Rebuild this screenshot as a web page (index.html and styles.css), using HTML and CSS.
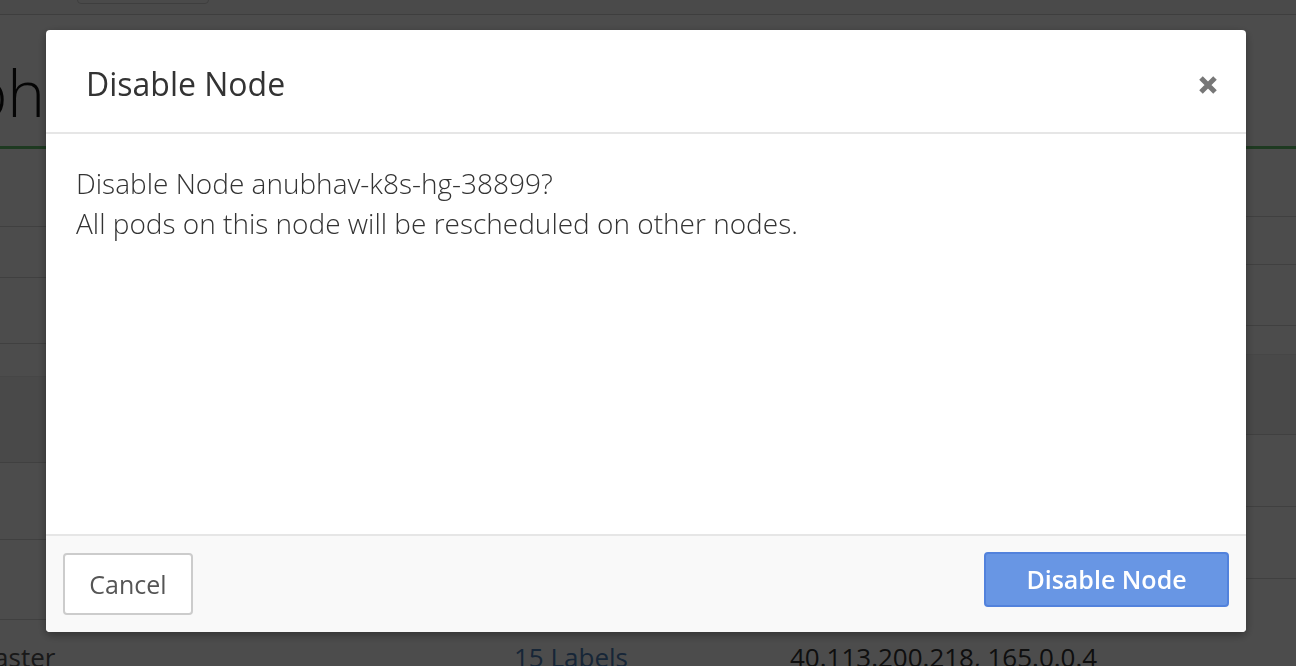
FILE: index.html
```html
<!DOCTYPE html>
<html lang="en">
<head>
<meta charset="utf-8">
<title>Disable Node</title>
<link rel="stylesheet" href="styles.css">
</head>
<body>
<div class="page">
  <div class="topbar"><div class="tb-btn"></div></div>
  <div class="heading"><h1 class="h-text">Graph</h1></div>
  <div class="rule"></div>
  <div class="content">
    <div class="main">
      <div class="row m1"></div>
      <div class="row m2"></div>
      <div class="row m3"></div>
      <div class="row m4 soft"></div>
      <div class="row m5 shade"></div>
      <div class="row m6"></div>
      <div class="row m7"></div>
      <div class="row last">
        <span class="tag">master</span>
        <a class="labels">15 Labels</a>
        <span class="ips">40.113.200.218, 165.0.0.4</span>
      </div>
    </div>
    <div class="aside">
      <div class="row a1"></div>
      <div class="row a2"></div>
      <div class="row a3"></div>
      <div class="row a4 soft"></div>
      <div class="row a5 shade"></div>
      <div class="row a6"></div>
      <div class="row a7"></div>
    </div>
  </div>
</div>
<div class="overlay"></div>
<div class="modal" role="dialog">
  <div class="modal-header">
    <h2 class="modal-title">Disable Node</h2>
    <button class="close" aria-label="Close">
      <svg width="20" height="20" viewBox="0 0 20 20"><path d="M3 3 L17 17 M17 3 L3 17" stroke="#777" stroke-width="5" fill="none"/></svg>
    </button>
  </div>
  <div class="modal-body">
    <p>Disable Node anubhav-k8s-hg-38899?</p>
    <p>All pods on this node will be rescheduled on other nodes.</p>
  </div>
  <div class="modal-footer">
    <button class="btn btn-default">Cancel</button>
    <button class="btn btn-primary">Disable Node</button>
  </div>
</div>
</body>
</html>
```

FILE: styles.css
```css
html, body {
  margin: 0;
  padding: 0;
  height: 100%;
  overflow: hidden;
}
body {
  font-family: "Open Sans", "Liberation Sans", sans-serif;
  background: #fff;
  color: #333;
}

/* background page */
.page {
  width: 1296px;
  height: 666px;
  overflow: hidden;
}
.topbar {
  height: 14px;
  border-bottom: 1px solid #cfcfcf;
  background: #f8f8f8;
  padding-left: 77px;
  overflow: hidden;
}
.tb-btn {
  width: 132px;
  height: 14px;
  margin-top: -10px;
  border: 1px solid #cfcfcf;
  border-radius: 4px;
  box-sizing: border-box;
}
.heading {
  height: 131px;
  width: 46px;
  display: flex;
  justify-content: flex-end;
  align-items: flex-start;
  overflow: hidden;
}
.h-text {
  margin: 0;
  margin-right: 1px;
  padding-top: 47px;
  font-size: 64px;
  line-height: 62px;
  font-weight: 300;
  color: #111;
  white-space: nowrap;
}
.rule {
  height: 3px;
  background: #67c171;
}
.content {
  display: flex;
}
.main {
  flex: 1;
}
.aside {
  width: 50px;
}
.row {
  box-sizing: border-box;
  border-bottom: 1px solid #d5d5d5;
}
.row.soft { border-bottom-color: #ececec; }
.row.shade { background: #f4f4f4; }
.m1 { height: 78px; }
.m2 { height: 51px; }
.m3 { height: 66px; }
.m4 { height: 33px; }
.m5 { height: 86px; }
.m6 { height: 77px; }
.m7 { height: 80px; }
.a1 { height: 68px; }
.a2 { height: 48px; }
.a3 { height: 61px; }
.a4 { height: 29px; }
.a5 { height: 80px; }
.a6 { height: 72px; }
.a7 { height: 72px; }
.row.last {
  border: none;
  display: flex;
  align-items: flex-start;
  padding-top: 22px;
  font-size: 26px;
  line-height: 30px;
  color: #555;
}
.tag {
  display: block;
  width: 67px;
  background: #fff;
  text-indent: -30px;
  overflow: hidden;
  white-space: nowrap;
}
.labels {
  margin-left: 447px;
  color: #4f7fba;
}
.ips {
  margin-left: 162px;
  color: #333;
}

/* overlay */
.overlay {
  position: fixed;
  inset: 0;
  background: rgba(0, 0, 0, 0.7);
}

/* modal */
.modal {
  position: fixed;
  left: 46px;
  top: 30px;
  width: 1200px;
  background: #fff;
  border-radius: 4px;
  box-shadow: 0 3px 10px rgba(0, 0, 0, 0.35);
  overflow: hidden;
}
.modal-header {
  display: flex;
  align-items: center;
  justify-content: space-between;
  padding: 33px 28px 27px 40px;
  border-bottom: 2px solid #e6e6e6;
}
.modal-title {
  margin: 0;
  font-size: 32px;
  line-height: 42px;
  font-weight: 400;
  color: #333;
}
.close {
  display: flex;
  padding: 0;
  margin: 2px 0 0 0;
  border: none;
  background: none;
  cursor: pointer;
}
.modal-body {
  box-sizing: border-box;
  min-height: 400px;
  padding: 29px 30px;
  font-size: 28px;
  line-height: 40px;
  font-weight: 300;
  color: #333;
}
.modal-body p {
  margin: 0;
}
.modal-footer {
  display: flex;
  justify-content: space-between;
  align-items: flex-start;
  padding: 17px;
  border-top: 2px solid #e6e6e6;
  background: #f9f9f9;
}
.btn {
  font-family: "Open Sans", "Liberation Sans", sans-serif;
  font-size: 25px;
  border-radius: 4px;
  box-sizing: border-box;
  cursor: pointer;
}
.btn-default {
  width: 130px;
  height: 62px;
  background: #fff;
  border: 2px solid #ccc;
  color: #555;
  padding: 0;
}
.btn-primary {
  width: 245px;
  height: 55px;
  margin-top: -1px;
  background: #6896e4;
  border: 2px solid #5282dc;
  color: #fff;
  font-weight: 600;
  padding: 0 0 2px 0;
}
```
